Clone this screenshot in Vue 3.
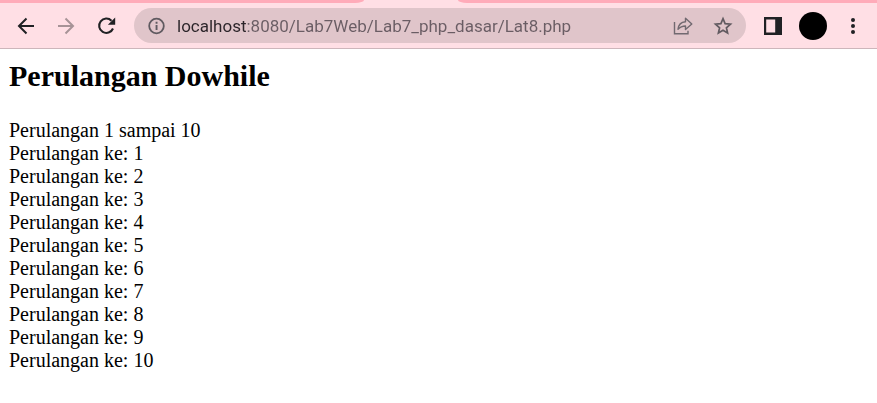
<script setup>
import { ref } from 'vue'

const address = ref('localhost:8080/Lab7Web/Lab7_php_dasar/Lat8.php')
const count = 10
</script>

<template>
  <div class="browser">
    <div class="tabs">
      <div class="strip strip-left"></div>
      <div class="tab"></div>
      <div class="strip strip-right"></div>
    </div>
    <header class="toolbar">
      <button class="tool" type="button" aria-label="Back">
        <svg width="18" height="18" viewBox="0 0 18 18" fill="none" stroke="#202124" stroke-width="2">
          <path d="M17 9H2.500M9.500 1.500L2 9l7.500 7.500" />
        </svg>
      </button>
      <button class="tool" type="button" aria-label="Forward" disabled>
        <svg width="18" height="18" viewBox="0 0 18 18" fill="none" stroke="#a79397" stroke-width="2">
          <path d="M1 9h14.500M8.500 1.500L16 9l-7.500 7.500" />
        </svg>
      </button>
      <button class="tool" type="button" aria-label="Reload">
        <svg width="20" height="20" viewBox="0 0 20 20">
          <path d="M17 12.500A7.200 7.200 0 1 1 15.500 4.700" fill="none" stroke="#202124" stroke-width="2.100" />
          <path d="M19.200 1.500v7.300h-7.300z" fill="#202124" />
        </svg>
      </button>
      <form class="omnibox" @submit.prevent>
        <button class="inner info" type="button" aria-label="Site information">
          <svg width="18" height="18" viewBox="0 0 18 18">
            <circle cx="9.500" cy="9" r="7.300" fill="none" stroke="#5f5a60" stroke-width="1.800" />
            <path d="M8.600 8h1.900v5H8.600zM8.600 4.800h1.900v1.900H8.600z" fill="#5f5a60" />
          </svg>
        </button>
        <input v-model="address" class="address" type="text" aria-label="Address" spellcheck="false" />
        <button class="inner" type="button" aria-label="Share">
          <svg width="20" height="20" viewBox="0 0 20 20" fill="none" stroke="#716970" stroke-width="1.400">
            <path d="M1.500 6v11.800h13.500v-3" />
            <path d="M5 13.300C5.500 8.500 8 6 12.500 5.700V2.200L18.800 8l-6.300 5.500V10C9 10 7 11 5 13.300z" stroke-linejoin="round" />
          </svg>
        </button>
        <button class="inner" type="button" aria-label="Bookmark">
          <svg width="20" height="20" viewBox="0 0 20 20" fill="none" stroke="#625b61" stroke-width="1.700">
            <path d="M10 2.700l2.100 5 5.400.500-4.100 3.600 1.200 5.300-4.600-2.800-4.600 2.800 1.200-5.300-4.100-3.600 5.400-.500z" />
          </svg>
        </button>
      </form>
      <button class="tool" type="button" aria-label="Side panel">
        <svg width="18" height="18" viewBox="0 0 18 18">
          <path d="M0 0h18v18H0zM2.200 2.400v13.200h9V2.400z" fill="#202124" fill-rule="evenodd" />
        </svg>
      </button>
      <button class="tool" type="button" aria-label="Profile"><span class="avatar"></span></button>
      <button class="tool" type="button" aria-label="Menu">
        <svg width="18" height="18" viewBox="0 0 18 18" fill="#202124">
          <circle cx="9" cy="3" r="2" />
          <circle cx="9" cy="9" r="2" />
          <circle cx="9" cy="15" r="2" />
        </svg>
      </button>
    </header>
    <main class="page">
      <h2>Perulangan Dowhile</h2>
      <p>
        Perulangan 1 sampai 10
        <template v-for="n in count" :key="n"><br />Perulangan ke: {{ n }}</template>
      </p>
    </main>
  </div>
</template>

<style>
body {
  margin: 0;
  background: #fff;
}
</style>

<style scoped>
.tabs {
  display: flex;
  height: 3px;
  background: #ffdfe5;
}

.strip {
  background: #ffabb9;
}

.strip-left {
  flex: 364;
  border-bottom-right-radius: 9px 3px;
}

.tab {
  flex: 94;
}

.strip-right {
  flex: 419;
  border-bottom-left-radius: 9px 3px;
}

.toolbar {
  display: flex;
  align-items: center;
  height: 45px;
  padding: 0 4px 0 6px;
  background: #ffdfe5;
  border-bottom: 1px solid #cdb6bb;
}

button {
  display: flex;
  align-items: center;
  justify-content: center;
  flex: none;
  padding: 0;
  border: 0;
  background: none;
}

.tool {
  width: 40px;
  height: 36px;
}

.omnibox {
  display: flex;
  align-items: center;
  flex: 1;
  min-width: 0;
  height: 35px;
  margin: 0 7px 0 8px;
  padding-right: 3px;
  border-radius: 18px;
  background: #e0c5ca;
}

.inner {
  width: 40px;
  height: 34px;
}

.info {
  width: 43px;
}

.address {
  flex: 1;
  min-width: 0;
  height: 34px;
  padding: 0;
  border: 0;
  outline: 0;
  font: 17px/24px Roboto, "Open Sans", sans-serif;
  color: transparent;
  caret-color: #202124;
  background: linear-gradient(to right, #2b2429 70px, #6a5d64 70px);
  background-clip: text;
}

.avatar {
  width: 28px;
  height: 28px;
  border-radius: 50%;
  background: #000;
}

.page {
  padding: 9px;
  font-family: "Liberation Serif", "Times New Roman", serif;
  color: #000;
}

h2 {
  margin: 0 0 26px;
  font-size: 30px;
  line-height: 35px;
}

p {
  margin: 0;
  font-size: 20px;
  line-height: 23px;
}
</style>
